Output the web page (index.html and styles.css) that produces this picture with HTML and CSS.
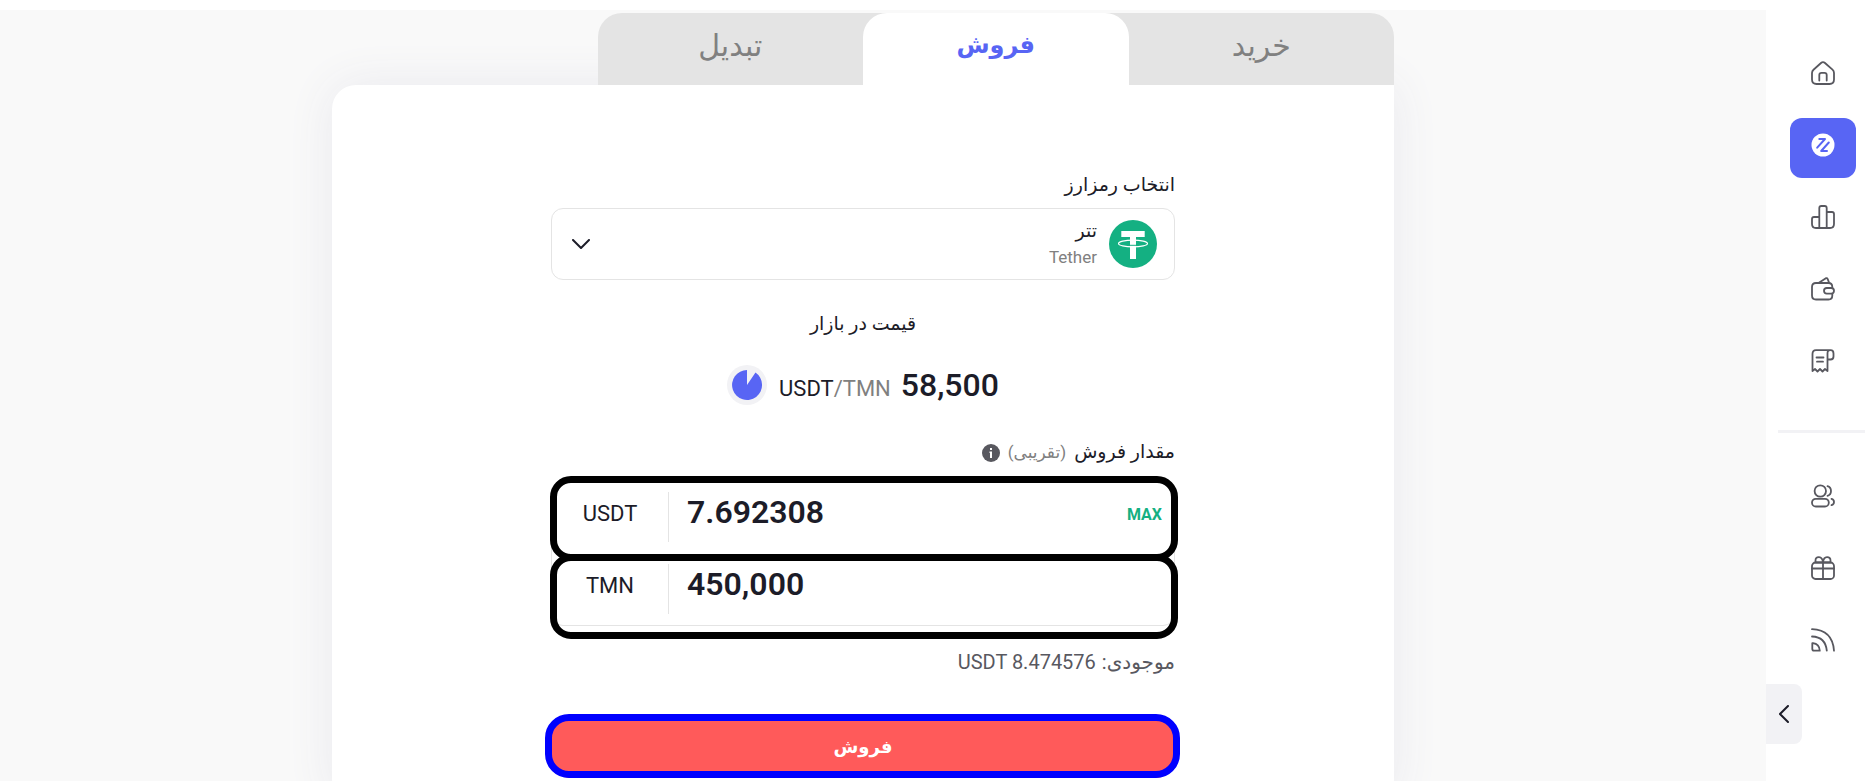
FILE: index.html
```html
<!DOCTYPE html>
<html lang="fa" dir="rtl">
<head>
<meta charset="utf-8">
<meta name="viewport" content="width=device-width, initial-scale=1">
<title>فروش تتر</title>
<link rel="stylesheet" href="styles.css">
</head>
<body>
<div class="app">
  <aside class="sidebar">
    <nav class="nav">
      <a class="nav-item" href="#" aria-label="خانه"><svg class="icon" viewBox="0 0 24 24"><path d="M1 12Q1 10 2.500 8.700L10 2Q12 .2 14 2L21.500 8.700Q23 10 23 12V18.500Q23 23 18.500 23H5.500Q1 23 1 18.500Z"/><path d="M8.300 19.500V14Q8.300 11.800 10.500 11.800H13.500Q15.700 11.800 15.700 14V19.500"/></svg></a>
      <a class="nav-item active" href="#" aria-label="معامله" aria-current="page"><svg class="icon" viewBox="0 0 24 24"><circle cx="12" cy="12" r="11.500" class="disc"/><path class="mark" d="M8.300 6H14L6.200 14.700M17.800 9.500 10.200 18H16"/></svg></a>
      <a class="nav-item" href="#" aria-label="بازار"><svg class="icon" viewBox="0 0 24 24"><path d="M8.300 23V3Q8.300 1 10.300 1H13.700Q15.700 1 15.700 3V23M8.300 12H3Q1 12 1 14V19Q1 23 5 23H19Q23 23 23 19V9Q23 7 21 7H15.700"/></svg></a>
      <a class="nav-item" href="#" aria-label="کیف پول"><svg class="icon" viewBox="0 0 24 24"><path d="M21.300 11V10Q21.300 6 17.500 6H5Q1 6 1 10V18.500Q1 22.500 5 22.500H17.500Q21.300 22.500 21.300 18.500V17M7.500 6 14.500 1.400Q16 .6 16.700 2.200L18.200 6"/><rect x="13" y="11" width="10" height="5.600" rx="2.800"/></svg></a>
      <a class="nav-item" href="#" aria-label="سفارش‌ها"><svg class="icon" viewBox="0 0 24 24"><path d="M1.500 22V5Q1.500 1.200 5 1.200H19.500Q22.500 1.200 22.500 4.500V7.500Q22.500 10.500 19.500 10.500H16.500M16.500 22V4.500Q16.500 1.200 19 1.200M1.500 22 4 20 6.500 22.500 9 20 11.500 22.500 14 20 16.500 22M5.500 8.500H12.500M6 12.700H12"/></svg></a>
      <hr class="divider">
      <a class="nav-item" href="#" aria-label="دوستان"><svg class="icon" viewBox="0 0 24 24"><circle cx="9.300" cy="7" r="5.700"/><rect x="1" y="14.800" width="16.800" height="7.700" rx="3.800"/><path d="M16.500 2.200Q20 3.200 20 7T16.500 11.800M20.500 14.800Q23 15.500 23 18T20.500 21.200"/></svg></a>
      <a class="nav-item" href="#" aria-label="جایزه"><svg class="icon" viewBox="0 0 24 24"><rect x="1" y="6.500" width="22" height="16.500" rx="3.500"/><path d="M1 12.500H23M12 6.500V23M12 6.500H4.500V4.500Q4.500 1 8 1.200T12 6.500Q12.500 1.300 16 1.200T19.500 4.500V6.500Z"/></svg></a>
      <a class="nav-item" href="#" aria-label="وبلاگ"><svg class="icon" viewBox="0 0 24 24"><path d="M1.300 15.200H2Q8.300 16 8.800 22.700H3Q1.300 22.700 1.300 21ZM1 8.500Q14.500 9 15.800 22.700M1 1.200Q21.500 2 23 22.700"/></svg></a>
    </nav>
    <button class="toggle" type="button" aria-label="باز کردن منو"><svg class="toggle-icon" viewBox="0 0 10 18"><path d="M9 1 1 9 9 17"/></svg></button>
  </aside>

  <main class="main">
    <section class="trade">
      <div class="tabs" role="tablist">
        <button class="tab" type="button" role="tab" aria-selected="false">خرید</button>
        <button class="tab tab-active" type="button" role="tab" aria-selected="true">فروش</button>
        <button class="tab" type="button" role="tab" aria-selected="false">تبدیل</button>
      </div>
      <div class="card">
        <form class="form">
          <label class="label" for="coin">انتخاب رمزارز</label>
          <div class="coin-box">
            <svg class="coin-logo" viewBox="0 0 48 48"><circle cx="24" cy="24" r="24" fill="#14b082"/><ellipse cx="24" cy="23.500" rx="14.500" ry="3.400" fill="none" stroke="#fff" stroke-width="1.100"/><path fill="#fff" d="M12.300 11H35.700V17H27V39H21V17H12.300Z"/><path fill="none" stroke="#14b082" stroke-width="1" d="M20.500 25.300H27.500"/></svg>
            <span class="coin-text"><span class="coin-name">تتر</span><span class="coin-latin">Tether</span></span>
            <svg class="chevron" viewBox="0 0 18 10"><path d="M1 1 9 9 17 1"/></svg>
            <select class="coin-select" id="coin"><option>تتر</option></select>
          </div>

          <p class="market">قیمت در بازار</p>
          <div class="price" dir="ltr">
            <svg class="timer" viewBox="0 0 40 40"><circle cx="20" cy="20" r="20" fill="#f2f2f5"/><path fill="#5865f4" d="M20 20V5A15 15 0 1 0 28.500 7.600Z"/></svg>
            <span class="pair">USDT<span class="quote">/TMN</span></span>
            <span class="amount">58,500</span>
          </div>

          <label class="label label-amount" for="usdt"><span class="label-main">مقدار فروش</span><span class="approx">(تقریبی)</span><svg class="info" viewBox="0 0 18 18"><circle cx="9" cy="9" r="9" fill="#58585f"/><path fill="#fff" d="M8 4H10V6H8ZM7.500 7.500H10V14H8V9H7.500Z"/></svg></label>
          <div class="fields">
            <div class="field field-first">
              <button class="max" type="button">MAX</button>
              <input class="value" id="usdt" dir="ltr" type="text" inputmode="decimal" value="7.692308">
              <span class="unit">USDT</span>
            </div>
            <div class="field">
              <input class="value" id="tmn" dir="ltr" type="text" inputmode="decimal" value="450,000" aria-label="TMN">
              <span class="unit">TMN</span>
            </div>
          </div>
          <p class="balance"><span class="balance-label">موجودی:</span><bdi class="balance-value" dir="ltr">USDT 8.474576</bdi></p>
          <button class="submit" type="submit">فروش</button>
        </form>
      </div>
    </section>
  </main>
</div>
</body>
</html>
```
FILE: styles.css
```css
* { box-sizing: border-box; }
body {
  margin: 0;
  height: 100vh;
  overflow: hidden;
  background: #fff;
  color: #1c1c28;
  font-family: Roboto, "DejaVu Sans", sans-serif;
}
button, input, select { font: inherit; color: inherit; }
button { border: 0; padding: 0; background: none; cursor: pointer; }
p { margin: 0; }

.app { display: flex; height: 100%; }

.sidebar {
  position: relative;
  flex: none;
  width: 99px;
  padding-top: 46px;
  background: #fff;
}
.nav { display: flex; flex-direction: column; gap: 12px; }
.nav-item {
  display: flex;
  justify-content: center;
  width: 66px;
  height: 60px;
  margin-right: 9px;
  padding-top: 15px;
  border-radius: 12px;
}
.nav-item.active { background: #5865f4; }
.icon {
  width: 24px;
  height: 24px;
  fill: none;
  stroke: #58585f;
  stroke-width: 1.800;
  stroke-linecap: round;
  stroke-linejoin: round;
}
.icon .disc { fill: #fff; stroke: none; }
.icon .mark { stroke: #5865f4; stroke-width: 2; }
.divider {
  width: 87px;
  height: 3px;
  margin: 24px 0;
  border: 0;
  background: #f2f2f5;
}
.toggle {
  position: absolute;
  left: 0;
  bottom: 37px;
  display: flex;
  align-items: center;
  justify-content: center;
  width: 36px;
  height: 60px;
  border-radius: 0 8px 8px 0;
  background: #f2f2f5;
}
.toggle-icon { width: 10px; height: 18px; fill: none; stroke: #1c1c28; stroke-width: 2; stroke-linecap: round; }

.main {
  flex: 1;
  display: flex;
  margin-top: 10px;
  padding: 3px 372px 0 332px;
  overflow: hidden;
  background: #f9f9f9;
}
.trade { flex: 1; display: flex; flex-direction: column; min-width: 0; }
.tabs {
  position: relative;
  flex: none;
  display: grid;
  grid-template-columns: repeat(3, 1fr);
  width: 75%;
  height: 72px;
  border-radius: 24px 24px 0 0;
  background: #e4e4e4;
}
.tab {
  padding-bottom: 8px;
  color: #808080;
  font-size: 30px;
}
.tab-active {
  border-radius: 24px 24px 0 0;
  background: #fff;
  color: #5865f4;
  font-size: 24px;
  font-weight: 700;
}
.card {
  flex: 1 0 auto;
  padding: 84px 219px 24px;
  border-radius: 24px 0 24px 24px;
  background: #fff;
  box-shadow: 0 0 48px #e9e9ee;
}
.form { display: flex; flex-direction: column; }
.label { height: 32px; font-size: 19px; line-height: 32px; }
.coin-box {
  position: relative;
  display: flex;
  align-items: center;
  gap: 12px;
  height: 72px;
  margin-top: 7px;
  padding: 0 17px 0 20px;
  border: 1px solid #e4e4e4;
  border-radius: 12px;
}
.coin-logo { width: 48px; height: 48px; }
.coin-text { flex: 1; display: flex; flex-direction: column; padding-bottom: 2px; }
.coin-name { font-size: 19px; line-height: 28px; }
.coin-latin { color: #808080; font-size: 17px; line-height: 24px; }
.chevron { width: 18px; height: 10px; fill: none; stroke: #1c1c28; stroke-width: 2; stroke-linecap: round; stroke-linejoin: round; }
.coin-select { position: absolute; inset: 0; width: 100%; opacity: 0; }

.market { margin-top: 28px; font-size: 19px; line-height: 32px; text-align: center; }
.price { display: flex; align-items: center; justify-content: center; gap: 12px; height: 40px; margin-top: 25px; }
.timer { width: 40px; height: 40px; }
.pair { margin-right: -2px; padding-top: 6px; font-size: 22px; }
.quote { color: #808080; }
.amount { font-size: 32px; font-weight: 500; }

.label-amount { display: flex; align-items: center; gap: 8px; margin-top: 31px; }
.approx { color: #808080; font-size: 17px; }
.info { width: 18px; height: 18px; margin-top: 2px; }
.fields { margin-top: 12px; border: 1px solid #e4e4e4; border-radius: 12px; }
.field { position: relative; display: flex; align-items: center; height: 72px; }
.field::after {
  content: "";
  position: absolute;
  inset: 1px -4px -14px -2px;
  border: 7px solid #000;
  border-radius: 21px;
  pointer-events: none;
}
.field-first::after { inset: -5px -4px -8px -2px; }
.max { margin-right: 12px; padding-bottom: 6px; color: #14b082; font-size: 16px; font-weight: 700; }
.value {
  flex: 1;
  min-width: 0;
  height: 50px;
  padding: 0 18px 10px;
  border: 0;
  border-left: 1px solid #e4e4e4;
  outline: 0;
  background: none;
  font-size: 32px;
  font-weight: 600;
}
.unit { width: 116px; padding-bottom: 8px; font-size: 22px; text-align: center; }
.balance { display: flex; gap: 6px; margin-top: 18px; color: #58585f; font-size: 20px; line-height: 36px; }
.submit {
  position: relative;
  height: 60px;
  margin-top: 38px;
  padding-bottom: 4px;
  border-radius: 20px;
  background: #ff5a5a;
  color: #fff;
  font-size: 18px;
  font-weight: 700;
}
.submit::after {
  content: "";
  position: absolute;
  inset: -4px -5px 0 -6px;
  border: 7px solid #00f;
  border-radius: 24px;
  pointer-events: none;
}
```
